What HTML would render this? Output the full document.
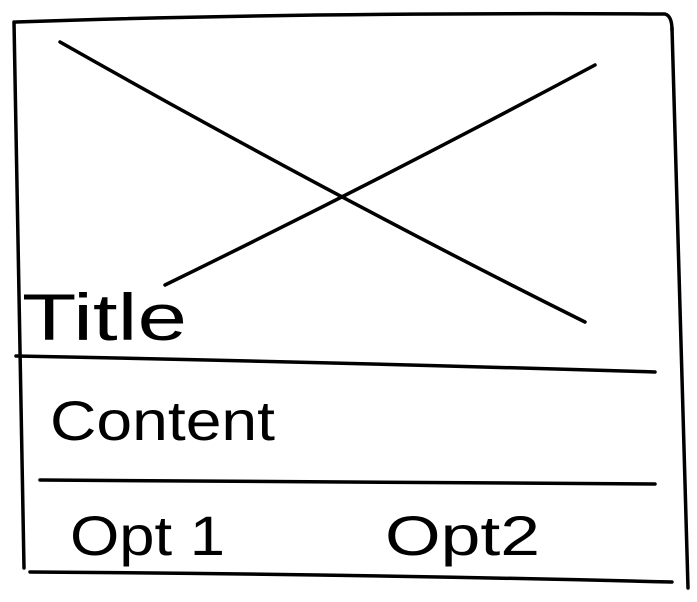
<!DOCTYPE html>
<html><head><meta charset="utf-8"><style>
html,body{margin:0;padding:0;background:#fff;width:697px;height:602px;overflow:hidden}
svg{display:block}
text{font-family:"Liberation Sans",sans-serif;fill:#000}
</style></head><body>
<svg width="697" height="602" viewBox="0 0 697 602" xmlns="http://www.w3.org/2000/svg">
<g fill="none" stroke="#000" stroke-width="3.5" stroke-linecap="round" stroke-linejoin="round">
<!-- frame -->
<path d="M16 22 Q300 12 665 14 Q672 16 672 30"/>
<path d="M14 22 Q18 300 24 568"/>
<path d="M672 28 Q680 300 688 588"/>
<path d="M30 572 Q350 574 672 582"/>
<!-- X -->
<path d="M60 42 Q330 195 585 322"/>
<path d="M595 65 Q380 180 165 285"/>
<!-- dividers -->
<path d="M16 356 Q330 362 655 372"/>
<path d="M40 480 Q350 482 655 484"/>
</g>
<text x="22" y="340" font-size="66" textLength="165" lengthAdjust="spacingAndGlyphs">Title</text>
<text x="50" y="440" font-size="56" textLength="225" lengthAdjust="spacingAndGlyphs">Content</text>
<text x="70" y="555" font-size="56" textLength="155" lengthAdjust="spacingAndGlyphs">Opt 1</text>
<text x="385" y="555" font-size="56" textLength="155" lengthAdjust="spacingAndGlyphs">Opt2</text>
</svg>
</body></html>
